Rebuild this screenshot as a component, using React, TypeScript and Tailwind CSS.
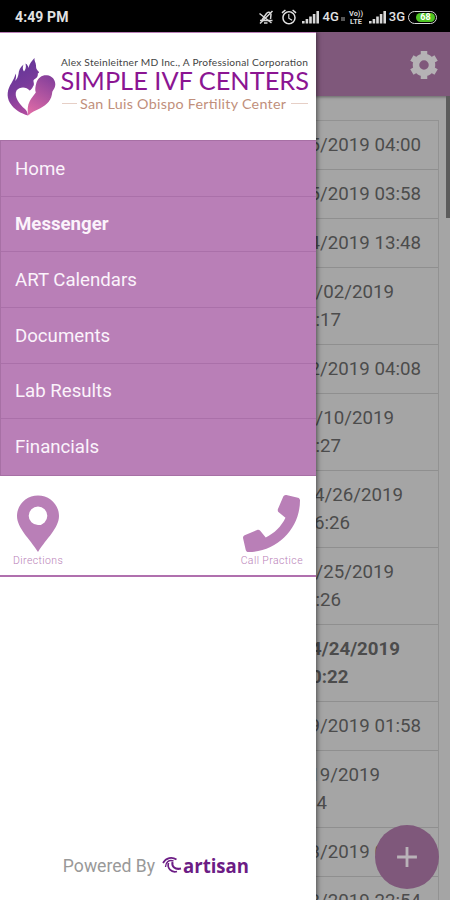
import { FaPhone } from "react-icons/fa";
import { MdAdd, MdAlarm } from "react-icons/md";

const menu = [
  { label: "Home" },
  { label: "Messenger", active: true },
  { label: "ART Calendars" },
  { label: "Documents" },
  { label: "Lab Results" },
  { label: "Financials" },
];

const messages = [
  { date: "15/2019 04:00", cell: "h-[49px] pr-[17px]" },
  { date: "15/2019 03:58", cell: "h-[49px] pr-[17px]" },
  { date: "14/2019 13:48", cell: "h-[49px] pr-[17px]" },
  { date: "11/02/2019", time: "10:17", cell: "h-[77px] pr-[44px]" },
  { date: "12/2019 04:08", cell: "h-[49px] pr-[17px]" },
  { date: "11/10/2019", time: "10:27", cell: "h-[77px] pr-[44px]" },
  { date: "04/26/2019", time: "16:26", cell: "h-[77px] pr-[35px]" },
  { date: "04/25/2019", time: "10:26", cell: "h-[77px] pr-[44px]" },
  { date: "04/24/2019", time: "10:22", cell: "h-[77px] pr-[38px] font-bold" },
  { date: "19/2019 01:58", cell: "h-[49px] pr-[17px]" },
  { date: "11/19/2019", time: "10:14", cell: "h-[77px] pr-[58px]" },
  { date: "13/2019 04:12", cell: "h-[49px] pr-[17px]" },
  { date: "13/2019 22:54", cell: "h-[49px] pr-[17px]" },
];

const Signal = () => (
  <svg width="18" height="14" viewBox="0 0 18 14" fill="#d8d8d8">
    <rect x="0" y="11" width="2.6" height="2.5" />
    <rect x="3.6" y="9" width="2.6" height="4.5" />
    <rect x="7.2" y="6.5" width="2.6" height="7" />
    <rect x="10.8" y="4" width="2.6" height="9.5" />
    <rect x="14.4" y="1" width="2.6" height="12.5" />
  </svg>
);

const StatusBar = () => (
  <div className="flex h-8 shrink-0 items-center bg-black pl-[15px] pr-[13px] pt-0.5 text-[#e2e2e2]">
    <span className="text-[14px] font-bold tracking-[0.1px]">4:49 PM</span>
    <div className="ml-auto flex items-center">
      <svg width="16" height="16" viewBox="0 0 16 16" fill="none" stroke="#d8d8d8" strokeWidth="1.5">
        <path d="M4 11L8.500 4.500C10 2.500 12.500 3 13 5.500L12.500 10M2 11.500h12.500M6 14h3.500" />
        <path d="M1.500 4.500L13.500 14M2 14.500L14.500 2" />
      </svg>
      <MdAlarm className="ml-1.5 text-[18px]" />
      <span className="ml-[4px]">
        <Signal />
      </span>
      <span className="ml-[3px] text-[13px] font-medium leading-4">4G</span>
      <span className="ml-[2px] mt-1 size-[4px] bg-[#555]" />
      <svg className="ml-[3px]" width="16" height="16" viewBox="0 0 16 16" fill="#d8d8d8" fontSize="7.500" fontWeight="700">
        <text x="1" y="7" textLength="14" lengthAdjust="spacingAndGlyphs">Vo))</text>
        <text x="2" y="15" textLength="12" lengthAdjust="spacingAndGlyphs">LTE</text>
      </svg>
      <span className="ml-[5px]">
        <Signal />
      </span>
      <span className="ml-[2px] text-[13px] font-medium leading-4">3G</span>
      <span className="ml-[3px] flex h-[13px] w-[29px] items-center justify-end rounded-full border-[1.5px] border-[#d8d8d8] p-px">
        <span className="flex h-full w-[19px] items-center justify-center rounded-full bg-[#4fc523] text-[9px] font-bold leading-none text-white">
          68
        </span>
      </span>
    </div>
  </div>
);

const Logo = () => (
  <svg width="316" height="107" viewBox="0 33 316 107" className="block">
    <defs>
      <linearGradient id="mother" x1="0.3" y1="0" x2="0.6" y2="1">
        <stop offset="0" stopColor="#5f3597" />
        <stop offset="0.5" stopColor="#793b9b" />
        <stop offset="1" stopColor="#b34c9f" />
      </linearGradient>
      <linearGradient id="child" x1="0.7" y1="0" x2="0.3" y2="1">
        <stop offset="0" stopColor="#86409b" />
        <stop offset="1" stopColor="#dc6aa6" />
      </linearGradient>
    </defs>
    <path
      fill="url(#mother)"
      d="M34.500 58c-.5 3 1.500 4.500 1.500 7.500 0 2.500.5 4 2 5.500 1.500 1.300 1.300 2-.2 2.500.3 2-.3 3-1.500 4.500-1.500 1-3.300 1.500-2.800 3.500.3 2 1 3-.5 5-1 2-2 3.500-3.500 4-3-4-10-4-13 0-3 6 3 14 8.500 18.500 1.500 1.500 2.500 3 3 6.500-7-2-14-6-18-12.500-4-7-2.500-14 1.500-20 1.500-3 3.500-6 4-9.500 1 2.500.5 5-.5 7.500 2-2 3-4 3.500-7 .3-3.500 1.500-6.500 5-9.500-1 2.500-1 5 .5 7 1.500-2 2.500-4 1.500-8 2 1 2.500 2.500 3 4.500.8-3 1.500-5 6-10z"
    />
    <path
      fill="url(#child)"
      d="M36.500 82.500c1.500-5 6-7.700 10.500-7.200 5 .5 8.500 4.500 8.300 9.500-.2 3.500-2 5-3 7-.5 8-5 13-12 16.500-5 2.500-9 3.700-12 7.200-1-4.500-1-10 1.500-14.500 2-4 4-5.500 6-8.500-1-2.500-.5-6 .7-10z"
    />
    <text x="61" y="66" textLength="247" fontSize="10.200" fill="#444" fontFamily="Lato, sans-serif">
      Alex Steinleitner MD Inc., A Professional Corporation
    </text>
    <text x="60.500" y="90" textLength="248.500" lengthAdjust="spacingAndGlyphs" fontSize="24.500" fill="#8b1592" fontFamily="Lato, sans-serif">
      SIMPLE IVF CENTERS
    </text>
    <text x="80" y="108.800" textLength="206" fontSize="14.300" fill="#c18f7b" fontFamily="Lato, sans-serif">
      San Luis Obispo Fertility Center
    </text>
    <path d="M62 103.500h15M291 103.500h17" stroke="#e6cfc6" />
  </svg>
);

const Artisan = () => (
  <svg width="88" height="26" viewBox="0 0 88 26" fill="none" stroke="#6c1c85">
    <path d="M1 10C4 4.500 10 3.500 14.500 6.500" strokeWidth="1.700" />
    <path d="M3.500 14C3.500 9 7 6.500 11.500 8" strokeWidth="1.400" />
    <path d="M6.500 10C5 15 9 20 15 18.500" strokeWidth="1.700" />
    <path d="M10.500 9C9.500 13.500 13 17 19 15.500" strokeWidth="2" />
    <text x="21" y="19.500" textLength="66" lengthAdjust="spacingAndGlyphs" fontSize="19.500" fontWeight="700" fill="#6c1c85" stroke="none" fontFamily="'Open Sans', sans-serif">
      artisan
    </text>
  </svg>
);

const Drawer = () => (
  <aside className="absolute inset-y-0 left-0 flex w-[316px] flex-col border-t border-[#b97fb7] bg-white shadow-[1px_0_5px_rgba(0,0,0,0.55)]">
    <Logo />
    <nav className="border-y border-l border-[#a770a5] bg-[#b97fb7]">
      {menu.map((item) => (
        <a
          key={item.label}
          className={`flex h-[55.65px] items-center border-b border-[#aa70a9] pl-[14px] pt-[2.5px] text-[18.650px] text-[#fbf3fb] last:border-b-0 ${
            item.active ? "font-bold" : "font-normal"
          }`}
        >
          {item.label}
        </a>
      ))}
    </nav>
    <div className="flex h-[101px] justify-between border-b-2 border-[#b070ae] px-[13px] pt-[19px] text-[#b97fb7]">
      <div className="flex flex-col items-center">
        <svg width="42" height="57" viewBox="0 0 42 57" fill="currentColor" fillRule="evenodd">
          <path d="M21 .500C9.500.500 0 9.500 0 21c0 12 12.500 22.500 21 36 8.500-13.500 21-24 21-36C42 9.500 32.500.500 21 .500zM21 11.500a9.300 9.300 0 1 1 0 18.600 9.300 9.300 0 0 1 0-18.600z" />
        </svg>
        <span className="mt-px text-[10.500px] font-light leading-4 tracking-[0.400px]">Directions</span>
      </div>
      <div className="flex flex-col items-center pl-px">
        <FaPhone className="h-[57px] w-[57px]" />
        <span className="mt-px text-[10.500px] font-light leading-4 tracking-[0.400px]">Call Practice</span>
      </div>
    </div>
    <div className="mb-[21px] mt-auto flex items-center justify-center pr-[3px]">
      <span className="mr-[7px] text-[17.600px] text-[#999]">Powered By</span>
      <Artisan />
    </div>
  </aside>
);

export default function App() {
  return (
    <div className="flex h-[900px] w-[450px] flex-col overflow-hidden bg-[#a5a5a5] font-[Roboto,sans-serif]">
      <StatusBar />
      <div className="relative min-h-0 flex-1 overflow-hidden">
        <header className="flex h-16 items-center justify-end bg-[#7f587b] pr-[11px] pt-0.5 shadow-[0_1px_3px_rgba(0,0,0,0.4)]">
          <svg width="30" height="30" viewBox="-15 -15 30 30" fill="none" stroke="#b5b2b5">
            <circle r="8" strokeWidth="6.500" />
            <path d="M0-14V-9M0 9V14" strokeWidth="6.500" />
            <path d="M0-14V-9M0 9V14" strokeWidth="6.500" transform="rotate(60)" />
            <path d="M0-14V-9M0 9V14" strokeWidth="6.500" transform="rotate(120)" />
          </svg>
        </header>
        <div className="ml-[200px] mr-[11px] mt-6 border-r border-t border-[#929292] text-[18.700px] leading-7 text-[#4c4c4c]">
          {messages.map((m, i) => (
            <div key={i} className={`flex items-center justify-end border-b border-[#8f8f8f] ${m.cell}`}>
              <div>
                <div>{m.date}</div>
                {m.time && <div>{m.time}</div>}
              </div>
            </div>
          ))}
        </div>
        <div className="absolute right-0 top-16 h-[122px] w-1 bg-[#5c5c5c]" />
        <button className="absolute bottom-[11px] right-[11px] flex size-16 items-center justify-center rounded-full bg-[#7f587b]">
          <MdAdd className="text-[34px] text-[#b9b2b8]" />
        </button>
        <Drawer />
      </div>
    </div>
  );
}
